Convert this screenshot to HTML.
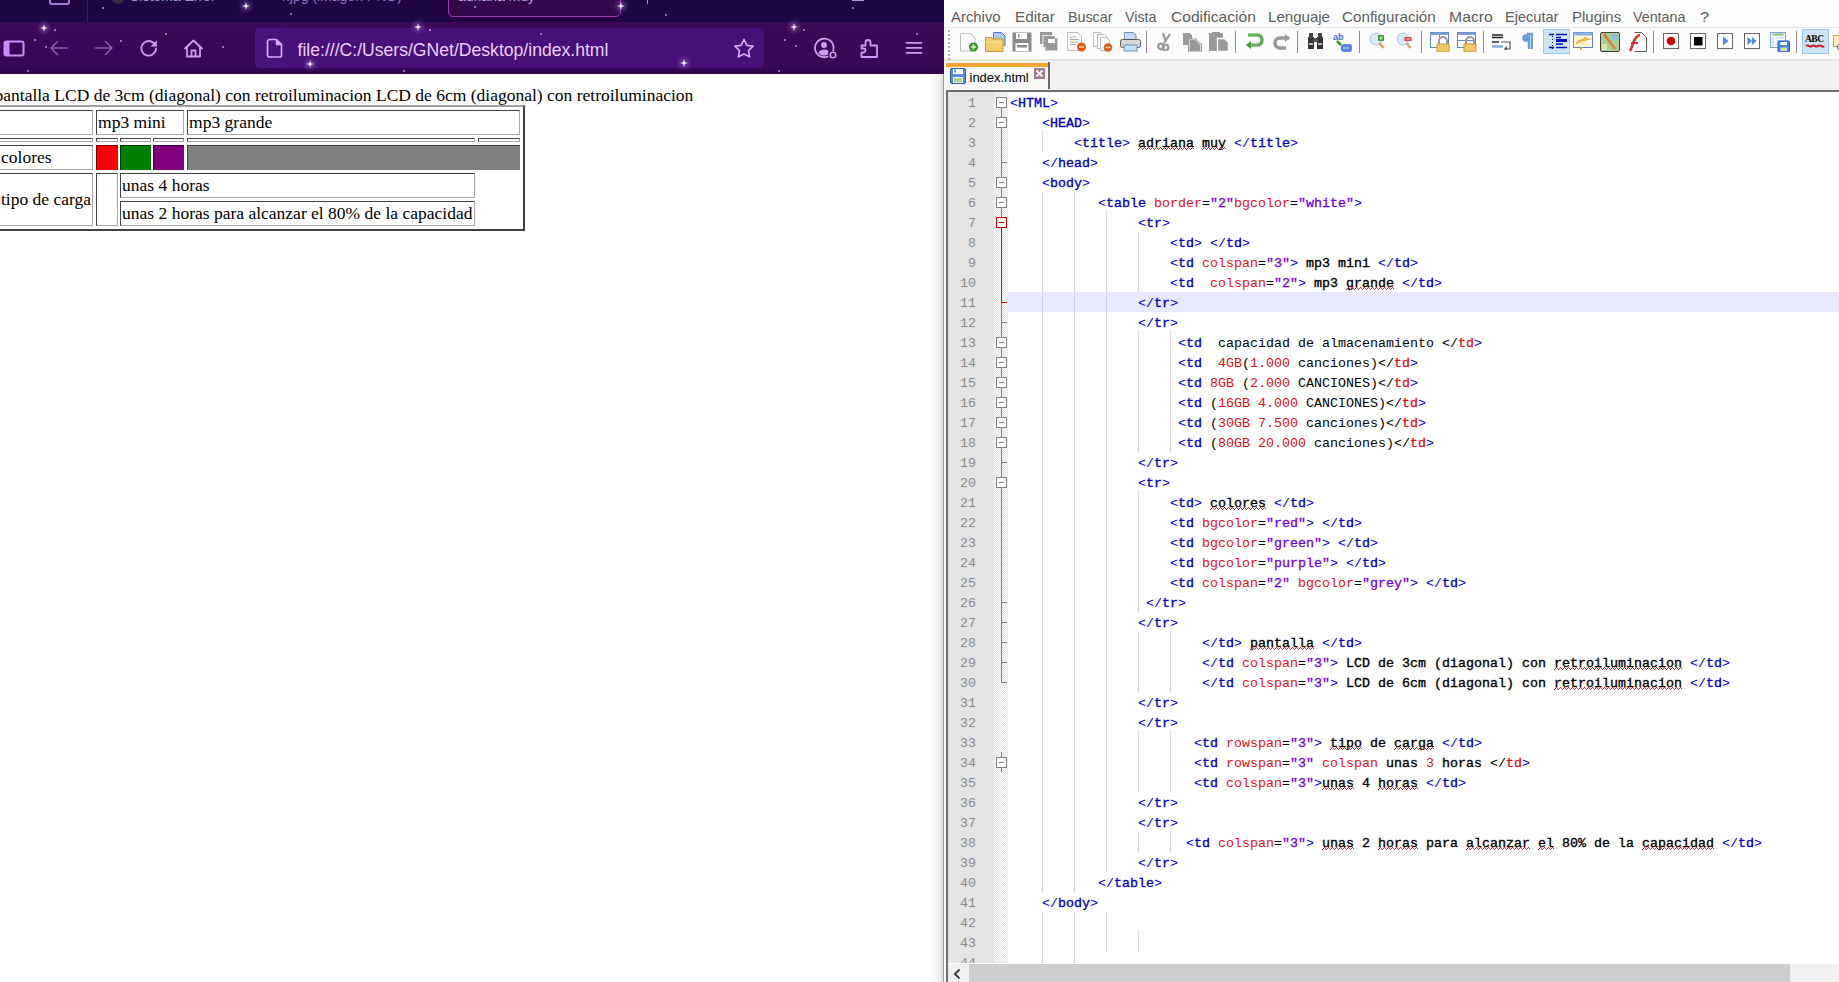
<!DOCTYPE html><html><head><meta charset="utf-8"><title>index.html</title><style>
*{box-sizing:border-box}
html,body{margin:0;padding:0}
body{width:1839px;height:982px;overflow:hidden;position:relative;background:#fff;font-family:"Liberation Sans",sans-serif}
.abs{position:absolute}
#br{position:absolute;left:0;top:0;width:944px;height:982px;overflow:hidden;background:#fff}
#tabbar{position:absolute;left:0;top:0;width:944px;height:22px;background:#210646}
#toolbar{position:absolute;left:0;top:22px;width:944px;height:52px;background:linear-gradient(#3c0858,#3a0757 80%,#31054e)}
#url{position:absolute;left:255px;top:28px;width:509px;height:40px;border-radius:5px;background:#470f77}
.star{position:absolute;width:2px;height:2px;border-radius:1px;background:rgba(225,200,255,.75)}
.glow{position:absolute;width:16px;height:16px;border-radius:8px;background:radial-gradient(circle,rgba(200,160,255,.35),rgba(200,160,255,0) 70%)}
#page{position:absolute;left:0;top:74px;width:944px;height:908px;overflow:hidden}
.ser{font-family:"Liberation Serif",serif;font-size:17.5px;line-height:20px;white-space:pre;color:#000;position:absolute}
.cell{position:absolute;border-style:solid;border-width:1px;border-color:#404040 #a8a8a8 #a8a8a8 #404040}
#npp{position:absolute;left:944px;top:0;width:895px;height:982px;background:#f0f0f0;overflow:hidden}
.menu{position:absolute;top:7px;font-size:14.5px;color:#5c5c5c;white-space:pre;line-height:20px}
#ed{position:absolute;left:946px;top:90px;width:893px;height:873px;background:#fff}
.ln{position:absolute;left:948px;width:28px;text-align:right;font-family:"Liberation Mono",monospace;font-size:13.33px;line-height:20px;color:#8a8a8a;white-space:pre}
.cl{position:absolute;font-family:"Liberation Mono",monospace;font-size:13.33px;line-height:20px;white-space:pre}
.b{color:#0000d8}
.t{color:#0000c0;-webkit-text-stroke:.35px #0000c0}
.a{color:#e01010}
.e{color:#000}
.s{color:#7000e8;-webkit-text-stroke:.3px #7000e8}
.x{color:#000;-webkit-text-stroke:.35px #000}
.xs{color:#000;-webkit-text-stroke:.35px #000;position:relative}
.xs:after{content:"";position:absolute;left:0;right:0;top:11px;height:3px;background:linear-gradient(90deg,transparent 2px,#c03030 2px,#c03030 3px,transparent 3px) 0 0/4px 1px repeat-x,linear-gradient(90deg,transparent 1px,#c03030 1px,#c03030 2px,transparent 2px,transparent 3px,#c03030 3px) 0 1px/4px 1px repeat-x,linear-gradient(90deg,#c03030 1px,transparent 1px) 0 2px/4px 1px repeat-x}
.u{color:#000}
.n{color:#e01010}
.k{color:#000}
.r{color:#e01010;-webkit-text-stroke:.3px #e01010}
.guide{position:absolute;width:1px;background:repeating-linear-gradient(to bottom,#b8b8b8 0,#b8b8b8 1px,transparent 1px,transparent 2px)}
.fbox{position:absolute;left:996px;width:11px;height:11px;border:1px solid #808080;background:#fff}
.fbox:after{content:"";position:absolute;left:2px;top:4px;width:5px;height:1px;background:#808080}
.fbox.red{border-color:#d00000}
.fbox.red:after{background:#d00000}
.vl{position:absolute;left:1001px;width:1px;background:#808080}
.tk{position:absolute;left:1001px;width:6px;height:1px;background:#808080}
.ico{position:absolute}
</style></head><body>
<div id="br">
<div id="tabbar"></div>
<div class="abs" style="left:49px;top:-16px;width:21px;height:21px;border:2px solid #a77ad6;border-radius:3px"></div>
<div class="abs" style="left:87px;top:0;width:1px;height:22px;background:#3b2160"></div>
<div class="abs" style="left:112px;top:-8px;width:12px;height:12px;border-radius:6px;background:#3a2a44"></div>
<div class="abs" style="left:130px;top:-12px;font-size:14px;line-height:17px;color:#a898c8;white-space:pre">Sistema Error</div>
<div class="abs" style="left:282px;top:-12.5px;font-size:14px;line-height:17px;color:#9078c0;white-space:pre">r.jpg (imagen PNG)</div>
<div class="abs" style="left:448px;top:-20px;width:173px;height:37px;border:1px solid #9b3bb5;border-radius:5px;background:#33084f"></div>
<div class="abs" style="left:458px;top:-12.5px;font-size:14px;line-height:17px;color:#b8a8d8;white-space:pre">adriana muy</div>
<div class="abs" style="left:647px;top:0;width:1px;height:4px;background:#a88cd0"></div>
<div class="abs" style="left:852px;top:0;width:12px;height:1px;background:#b098e0"></div>
<div id="toolbar"></div>
<div id="url"></div>
<div class="abs" style="left:255px;top:28px;width:45px;height:40px;border-radius:5px 0 0 5px;background:linear-gradient(90deg,#4c1480,rgba(71,15,119,0))"></div>
<svg class="ico" style="left:3px;top:40px" width="22" height="17" viewBox="0 0 22 17"><rect x="1.5" y="1.5" width="19" height="14" rx="2" fill="none" stroke="#c98cf6" stroke-width="2"/><rect x="1.5" y="1.5" width="5" height="14" fill="#c98cf6"/></svg>
<svg class="ico" style="left:49px;top:40px" width="20" height="16" viewBox="0 0 20 16"><path d="M18.5 8H2M8.5 1.5L2 8l6.5 6.5" fill="none" stroke="#8c55b8" stroke-width="1.6" stroke-linecap="round" stroke-linejoin="round"/></svg>
<svg class="ico" style="left:94px;top:40px" width="20" height="16" viewBox="0 0 20 16"><path d="M1.5 8H18M11.5 1.5L18 8l-6.5 6.5" fill="none" stroke="#8c55b8" stroke-width="1.6" stroke-linecap="round" stroke-linejoin="round"/></svg>
<svg class="ico" style="left:139px;top:38px" width="20" height="20" viewBox="0 0 20 20"><path d="M16.3 7.2A7.3 7.3 0 1 0 17 10.5" fill="none" stroke="#d29af5" stroke-width="1.8" stroke-linecap="round"/><path d="M17.8 2.2v6.3h-6.3z" fill="#d29af5"/></svg>
<svg class="ico" style="left:183px;top:38px" width="21" height="21" viewBox="0 0 21 21"><path d="M2 10.5L10.5 2.5 19 10.5M4 8.8V18.5h13V8.8M8.5 18.5v-6h4v6" fill="none" stroke="#d29af5" stroke-width="1.8" stroke-linejoin="round" stroke-linecap="round"/></svg>
<svg class="ico" style="left:266px;top:38px" width="18" height="20" viewBox="0 0 18 20"><path d="M3.5 1.5h7l5 5v10.5a2 2 0 0 1-2 2h-10a2 2 0 0 1-2-2v-13.5a2 2 0 0 1 2-2z" fill="none" stroke="#d9a8f8" stroke-width="1.7" stroke-linejoin="round"/><path d="M10.5 1.5v5h5" fill="#d9a8f8" stroke="#d9a8f8" stroke-width="1.5" stroke-linejoin="round"/></svg>
<div class="abs" style="left:297.5px;top:38.8px;font-size:17.6px;line-height:22px;color:#ecd0ff;white-space:pre">file:///C:/Users/GNet/Desktop/index.html</div>
<svg class="ico" style="left:733px;top:38px" width="22" height="20" viewBox="0 0 22 20"><path d="M11 1.6l2.8 5.7 6.2.9-4.5 4.4 1.1 6.2L11 15.9l-5.6 2.9 1.1-6.2L2 8.2l6.2-.9z" fill="none" stroke="#d9a8f8" stroke-width="1.7" stroke-linejoin="round"/></svg>
<svg class="ico" style="left:813px;top:37px" width="25" height="22" viewBox="0 0 25 22"><path d="M20.2 13.5A9.3 9.3 0 1 0 14.5 19.6" fill="none" stroke="#d29af5" stroke-width="1.8" stroke-linecap="round"/><circle cx="11" cy="8" r="3" fill="#d29af5"/><path d="M5.5 15.3c1.5-2 3.4-2.8 5.5-2.8s3.4.5 4.2 1.2v3.6c-1.2.7-2.6 1.3-4.2 1.3-2 0-3.8-.9-5.5-2.3z" fill="#d29af5"/><circle cx="20" cy="18" r="2.8" fill="none" stroke="#d29af5" stroke-width="1.6"/></svg>
<svg class="ico" style="left:859px;top:37px" width="21" height="22" viewBox="0 0 21 22"><path d="M2.5 8.5h4v-3a2.5 2.5 0 0 1 5 0v3h6.5v11.5h-15.5v-4.5h2a2 2 0 0 0 0-4h-2z" fill="none" stroke="#d29af5" stroke-width="1.8" stroke-linejoin="round"/></svg>
<svg class="ico" style="left:905px;top:41px" width="18" height="14" viewBox="0 0 18 14"><path d="M1.5 1.8h15M1.5 6.8h15M1.5 11.8h15" stroke="#d29af5" stroke-width="1.7" stroke-linecap="round"/></svg>
<div class="glow" style="left:35.5px;top:19.5px"></div>
<svg class="ico" style="left:39.5px;top:23.5px" width="8" height="8" viewBox="0 0 8 8"><path d="M4 0L4.8 3.2 8 4 4.8 4.8 4 8 3.2 4.8 0 4 3.2 3.2z" fill="#fff"/></svg>
<div class="star" style="left:53.8px;top:29.0px"></div>
<div class="star" style="left:33.5px;top:39.4px"></div>
<div class="star" style="left:44.8px;top:45.5px"></div>
<div class="star" style="left:27.4px;top:70.0px"></div>
<div class="star" style="left:119.6px;top:40.4px"></div>
<div class="star" style="left:165.0px;top:33.0px"></div>
<div class="star" style="left:222.0px;top:46.3px"></div>
<div class="glow" style="left:238.0px;top:-1.6px"></div>
<svg class="ico" style="left:242.0px;top:2.4px" width="8" height="8" viewBox="0 0 8 8"><path d="M4 0L4.8 3.2 8 4 4.8 4.8 4 8 3.2 4.8 0 4 3.2 3.2z" fill="#fff"/></svg>
<div class="star" style="left:290.0px;top:13.4px"></div>
<div class="glow" style="left:301.7px;top:56.4px"></div>
<svg class="ico" style="left:305.7px;top:60.4px" width="8" height="8" viewBox="0 0 8 8"><path d="M4 0L4.8 3.2 8 4 4.8 4.8 4 8 3.2 4.8 0 4 3.2 3.2z" fill="#fff"/></svg>
<div class="glow" style="left:410.0px;top:19.4px"></div>
<svg class="ico" style="left:414.0px;top:23.4px" width="8" height="8" viewBox="0 0 8 8"><path d="M4 0L4.8 3.2 8 4 4.8 4.8 4 8 3.2 4.8 0 4 3.2 3.2z" fill="#fff"/></svg>
<div class="star" style="left:428.5px;top:29.0px"></div>
<div class="star" style="left:403.0px;top:69.5px"></div>
<div class="star" style="left:540.0px;top:32.8px"></div>
<div class="glow" style="left:613.0px;top:-2.2px"></div>
<svg class="ico" style="left:617.0px;top:1.8px" width="8" height="8" viewBox="0 0 8 8"><path d="M4 0L4.8 3.2 8 4 4.8 4.8 4 8 3.2 4.8 0 4 3.2 3.2z" fill="#fff"/></svg>
<div class="star" style="left:665.0px;top:13.5px"></div>
<div class="glow" style="left:676.0px;top:55.3px"></div>
<svg class="ico" style="left:680.0px;top:59.3px" width="8" height="8" viewBox="0 0 8 8"><path d="M4 0L4.8 3.2 8 4 4.8 4.8 4 8 3.2 4.8 0 4 3.2 3.2z" fill="#fff"/></svg>
<div class="glow" style="left:786.0px;top:19.2px"></div>
<svg class="ico" style="left:790.0px;top:23.2px" width="8" height="8" viewBox="0 0 8 8"><path d="M4 0L4.8 3.2 8 4 4.8 4.8 4 8 3.2 4.8 0 4 3.2 3.2z" fill="#fff"/></svg>
<div class="star" style="left:803.0px;top:28.8px"></div>
<div class="star" style="left:783.5px;top:39.0px"></div>
<div class="star" style="left:794.6px;top:45.0px"></div>
<div class="star" style="left:915.5px;top:32.8px"></div>
<div class="star" style="left:777.5px;top:69.7px"></div>
<div class="star" style="left:101.7px;top:6.8px"></div>
<div class="star" style="left:852.0px;top:6.9px"></div>
<div class="star" style="left:474.0px;top:5.5px"></div>
<div class="ser" style="left:-5.5px;top:84.5px">pantalla LCD de 3cm (diagonal) con retroiluminacion LCD de 6cm (diagonal) con retroiluminacion</div>
<div class="abs" style="left:-8px;top:105px;width:533px;height:126px;border-style:solid;border-width:2px;border-color:#a0a0a0 #404040 #404040 #a0a0a0;background:#fff"></div>
<div class="cell" style="left:-2px;top:110px;width:95px;height:25px"></div>
<div class="cell" style="left:96px;top:110px;width:88px;height:25px"></div>
<div class="ser" style="left:98.1px;top:111.8px">mp3 mini</div>
<div class="cell" style="left:187px;top:110px;width:333px;height:25px"></div>
<div class="ser" style="left:189.1px;top:111.8px">mp3 grande</div>
<div class="cell" style="left:-2px;top:138px;width:95px;height:4px"></div>
<div class="cell" style="left:96px;top:138px;width:22px;height:4px"></div>
<div class="cell" style="left:120px;top:138px;width:31px;height:4px"></div>
<div class="cell" style="left:153px;top:138px;width:31px;height:4px"></div>
<div class="cell" style="left:187px;top:138px;width:288px;height:4px"></div>
<div class="cell" style="left:478px;top:138px;width:42px;height:4px"></div>
<div class="cell" style="left:-2px;top:145px;width:95px;height:25px"></div>
<div class="ser" style="left:1.0px;top:146.8px">colores</div>
<div class="cell" style="left:96px;top:145px;width:22px;height:25px;background:#ff0000;border-color:#7a0000 #ff0000 #ff0000 #7a0000"></div>
<div class="cell" style="left:120px;top:145px;width:31px;height:25px;background:#008000;border-color:#003800 #008000 #008000 #003800"></div>
<div class="cell" style="left:153px;top:145px;width:31px;height:25px;background:#800080;border-color:#3a003a #800080 #800080 #3a003a"></div>
<div class="cell" style="left:187px;top:145px;width:333px;height:25px;background:#808080;border-color:#404040 #808080 #808080 #404040"></div>
<div class="cell" style="left:-2px;top:173px;width:95px;height:53px"></div>
<div class="ser" style="left:1.0px;top:188.8px">tipo de carga</div>
<div class="cell" style="left:96px;top:173px;width:22px;height:53px"></div>
<div class="cell" style="left:120px;top:173px;width:355px;height:25px"></div>
<div class="ser" style="left:122.1px;top:174.8px">unas 4 horas</div>
<div class="cell" style="left:120px;top:201px;width:355px;height:25px"></div>
<div class="ser" style="left:122.1px;top:202.8px">unas 2 horas para alcanzar el 80% de la capacidad</div>
<div class="abs" style="left:929px;top:74px;width:12px;height:908px;background:linear-gradient(90deg,#fff,#eeeeee)"></div>
<div class="abs" style="left:941px;top:74px;width:2px;height:908px;background:#e4e4e4"></div>
<div class="abs" style="left:943px;top:74px;width:1px;height:908px;background:#9c9c9c"></div>
</div>
<div id="npp"></div>
<div class="abs" style="left:944px;top:0;width:895px;height:27px;background:#fdfdfd"></div>
<div class="menu" style="left:951.3px;transform-origin:0 0;transform:scaleX(1.026)">Archivo</div>
<div class="menu" style="left:1015.3px;transform-origin:0 0;transform:scaleX(1.053)">Editar</div>
<div class="menu" style="left:1068.2px;transform-origin:0 0;transform:scaleX(0.984)">Buscar</div>
<div class="menu" style="left:1125.0px;transform-origin:0 0;transform:scaleX(0.984)">Vista</div>
<div class="menu" style="left:1170.8px;transform-origin:0 0;transform:scaleX(1.074)">Codificación</div>
<div class="menu" style="left:1267.7px;transform-origin:0 0;transform:scaleX(1.039)">Lenguaje</div>
<div class="menu" style="left:1341.9px;transform-origin:0 0;transform:scaleX(1.048)">Configuración</div>
<div class="menu" style="left:1449.0px;transform-origin:0 0;transform:scaleX(1.087)">Macro</div>
<div class="menu" style="left:1505.3px;transform-origin:0 0;transform:scaleX(1.004)">Ejecutar</div>
<div class="menu" style="left:1572.0px;transform-origin:0 0;transform:scaleX(1.033)">Plugins</div>
<div class="menu" style="left:1633.3px;transform-origin:0 0;transform:scaleX(0.985)">Ventana</div>
<div class="menu" style="left:1699.5px;transform-origin:0 0;transform:scaleX(1.133)">?</div>
<div class="abs" style="left:944px;top:27px;width:895px;height:1px;background:#e6e6e6"></div>
<div class="abs" style="left:944px;top:28px;width:895px;height:31px;background:#fcfcfc"></div>
<div class="abs" style="left:944px;top:59px;width:895px;height:2px;background:#e3e3e3"></div>
<div class="abs" style="left:948px;top:30px;width:2px;height:30px;background:repeating-linear-gradient(to bottom,#b0b0b0 0,#b0b0b0 2px,transparent 2px,transparent 4px)"></div>
<div class="abs" style="left:1146px;top:31px;width:1px;height:22px;background:#8a8a8a"></div>
<div class="abs" style="left:1235px;top:31px;width:1px;height:22px;background:#8a8a8a"></div>
<div class="abs" style="left:1297px;top:31px;width:1px;height:22px;background:#8a8a8a"></div>
<div class="abs" style="left:1359px;top:31px;width:1px;height:22px;background:#8a8a8a"></div>
<div class="abs" style="left:1421px;top:31px;width:1px;height:22px;background:#8a8a8a"></div>
<div class="abs" style="left:1483px;top:31px;width:1px;height:22px;background:#8a8a8a"></div>
<div class="abs" style="left:1653px;top:31px;width:1px;height:22px;background:#8a8a8a"></div>
<div class="abs" style="left:1796px;top:31px;width:1px;height:22px;background:#8a8a8a"></div>
<div class="abs" style="left:1543px;top:29px;width:27px;height:25px;background:#cce4f7;border:1px solid #99c9ef"></div>
<div class="abs" style="left:1802px;top:29px;width:27px;height:25px;background:#cce4f7;border:1px solid #99c9ef"></div>
<svg class="ico" style="left:959px;top:32px" width="20" height="20" viewBox="0 0 20 20"><path d="M1.5 1.5h10l4.5 4.5v13h-14.5z" fill="#fafafa" stroke="#bdbdbd"/><circle cx="14.5" cy="15" r="4.5" fill="#3d8f2e"/><path d="M14.5 12.3v5.4M11.8 15h5.4" stroke="#c8f0b0" stroke-width="1.6"/></svg>
<svg class="ico" style="left:985px;top:32px" width="21" height="20" viewBox="0 0 21 20"><path d="M8.5 .5h8l3.5 3.5v9.5h-11.5z" fill="#a9c8f0" stroke="#4a78c0"/><path d="M.5 5.5h6l1 1.5h10.5v12.5h-17.5z" fill="#f7cd68" stroke="#c99a3a"/><path d="M1.5 10h16" stroke="#fbe3a0"/></svg>
<svg class="ico" style="left:1012px;top:32px" width="20" height="20" viewBox="0 0 20 20"><rect x=".5" y=".5" width="19" height="19" fill="#8a8a8a"/><rect x="4" y="1" width="11" height="6" fill="#fff"/><rect x="6" y="2" width="1.5" height="3.5" fill="#8a8a8a"/><rect x="3.5" y="11" width="13" height="8" fill="#fff"/><rect x="5" y="13" width="10" height="2.5" fill="#8a8a8a"/></svg>
<svg class="ico" style="left:1040px;top:32px" width="18" height="19" viewBox="0 0 18 19"><rect x="0" y="0" width="12" height="12" fill="#999"/><rect x="3" y="3.5" width="12" height="12" fill="#999" stroke="#fff" stroke-width=".8"/><rect x="5.5" y="6.5" width="12" height="12" fill="#999"/><rect x="8" y="7" width="7" height="4" fill="#fff"/></svg>
<svg class="ico" style="left:1067px;top:32px" width="20" height="20" viewBox="0 0 20 20"><path d="M.5 .5h10l4 4v14h-14z" fill="#fafafa" stroke="#bdbdbd"/><path d="M3 5h6M3 7.5h9M3 10h8M3 12.5h6" stroke="#a8a8a8"/><circle cx="14.5" cy="15" r="4.5" fill="#e05a10"/><path d="M12 15h5" stroke="#ffd0a0" stroke-width="1.6"/></svg>
<svg class="ico" style="left:1093px;top:32px" width="20" height="20" viewBox="0 0 20 20"><path d="M.5 .5h7l3 3v11h-10z" fill="#fafafa" stroke="#bdbdbd"/><path d="M4.5 2.5h7l3 3v11h-10z" fill="#fafafa" stroke="#bdbdbd"/><path d="M7.5 5.5h6l3 3v10h-9z" fill="#fafafa" stroke="#bdbdbd"/><circle cx="15" cy="15.5" r="4.3" fill="#e05a10"/><path d="M12.6 15.5h4.8" stroke="#ffd0a0" stroke-width="1.6"/></svg>
<svg class="ico" style="left:1120px;top:32px" width="21" height="20" viewBox="0 0 21 20"><path d="M4.5 .5h9l2.5 2.5v7h-11.5z" fill="#c3dbf8" stroke="#6a8fc0"/><rect x=".5" y="7.5" width="20" height="8" rx="2" fill="#d8d8d8" stroke="#555"/><rect x="4" y="13" width="13" height="6" fill="#c3e3f8" stroke="#6a8fc0"/></svg>
<svg class="ico" style="left:1157px;top:32px" width="16" height="19" viewBox="0 0 16 19"><path d="M6 1l3 9M13 2l-6 9" stroke="#999" stroke-width="2.2"/><circle cx="4" cy="14.5" r="2.8" fill="none" stroke="#999" stroke-width="2.2"/><circle cx="8.5" cy="15.5" r="2.8" fill="none" stroke="#999" stroke-width="2.2"/></svg>
<svg class="ico" style="left:1182px;top:32px" width="20" height="20" viewBox="0 0 20 20"><path d="M.5 .5h7l3 3v10h-10z" fill="#999" stroke="#fff"/><path d="M7 7.5h7l5 5v7h-12z" fill="#999" stroke="#fff" stroke-width="1.2"/><path d="M6.5 7h7.5l5.5 5.5v7.5h-13z" fill="none" stroke="#999"/></svg>
<svg class="ico" style="left:1209px;top:32px" width="20" height="20" viewBox="0 0 20 20"><rect x="0" y="1" width="14" height="18" fill="#999"/><rect x="3" y="0" width="8" height="3" fill="#999"/><path d="M8.5 6.5h7l4 4v9h-11z" fill="#999" stroke="#fff" stroke-width="1.4"/></svg>
<svg class="ico" style="left:1245px;top:32px" width="19" height="18" viewBox="0 0 19 18"><path d="M3 3h9a5 5 0 0 1 0 10H5" fill="none" stroke="#3a9a2a" stroke-width="3.2"/><path d="M1 13l5-4v8z" fill="#3a9a2a"/><path d="M3 3h9a5 5 0 0 1 0 10H5" fill="none" stroke="#8fd080" stroke-width="1"/></svg>
<svg class="ico" style="left:1272px;top:32px" width="19" height="18" viewBox="0 0 19 18"><path d="M17 6H8a5 5 0 0 0 0 10h6" fill="none" stroke="#9a9a9a" stroke-width="3.6"/><path d="M18 6l-5-4v8z" fill="#9a9a9a"/></svg>
<svg class="ico" style="left:1307px;top:32px" width="17" height="18" viewBox="0 0 17 18"><rect x="1" y="5" width="6" height="12" fill="#333"/><rect x="10" y="5" width="6" height="12" fill="#333"/><rect x="2" y="1" width="4" height="5" fill="#444"/><rect x="11" y="1" width="4" height="5" fill="#444"/><rect x="6" y="6" width="5" height="4" fill="#555"/><rect x="2" y="11" width="4" height="2" fill="#bbb"/><rect x="11" y="11" width="4" height="2" fill="#bbb"/></svg>
<svg class="ico" style="left:1333px;top:32px" width="20" height="20" viewBox="0 0 20 20"><text x="0" y="8" font-size="9" font-weight="bold" fill="#3f6fd0" font-family="Liberation Sans">ab</text><path d="M4 9l4 4" stroke="#3a9a2a" stroke-width="2.5"/><rect x="8" y="12" width="11" height="8" rx="3" fill="#4f86e0"/><path d="M10 16h6" stroke="#cfe0ff"/></svg>
<svg class="ico" style="left:1369px;top:32px" width="17" height="18" viewBox="0 0 17 18"><circle cx="7" cy="7" r="6" fill="#d8e8f8" stroke="#a8c4e0"/><path d="M10.5 11l4 5" stroke="#d9a35a" stroke-width="2.5"/><rect x="9" y="3" width="6" height="6" rx="1" fill="#3f9a33"/><path d="M12 4v4M10 6h4" stroke="#bff0a0"/></svg>
<svg class="ico" style="left:1396px;top:32px" width="17" height="18" viewBox="0 0 17 18"><circle cx="7" cy="7" r="6" fill="#d8e8f8" stroke="#a8c4e0"/><path d="M10.5 11l4 5" stroke="#d9a35a" stroke-width="2.5"/><rect x="8.5" y="5" width="7" height="4" fill="#e04040"/><path d="M10 7h4" stroke="#ffd0d0"/></svg>
<svg class="ico" style="left:1430px;top:32px" width="21" height="20" viewBox="0 0 21 20"><rect x=".5" y=".5" width="18" height="15" fill="#fff" stroke="#5a86c8"/><rect x=".5" y=".5" width="18" height="2.5" fill="#7aa0d8"/><path d="M9.5 3v12" stroke="#5a86c8"/><rect x="7" y="12" width="12" height="8" fill="#f0c860" stroke="#c89a30"/><path d="M9 12v-3a4 4 0 0 1 8 0v3" fill="none" stroke="#999" stroke-width="2"/></svg>
<svg class="ico" style="left:1457px;top:32px" width="21" height="20" viewBox="0 0 21 20"><rect x=".5" y=".5" width="18" height="15" fill="#fff" stroke="#5a86c8"/><rect x=".5" y=".5" width="18" height="2.5" fill="#7aa0d8"/><path d="M1 8.5h17" stroke="#5a86c8"/><rect x="7" y="12" width="12" height="8" fill="#f0c860" stroke="#c89a30"/><path d="M9 12v-3a4 4 0 0 1 8 0v3" fill="none" stroke="#999" stroke-width="2"/></svg>
<svg class="ico" style="left:1491px;top:32px" width="21" height="18" viewBox="0 0 21 18"><path d="M1 3h11M1 5.5h11M1 10h7" stroke="#222" stroke-width="1.6"/><path d="M10 10h9v7h-4" fill="none" stroke="#555" stroke-width="1.2"/><path d="M1 14.5h11" stroke="#8aa8d8" stroke-width="2.5"/><path d="M16 14v6l-3-3z" fill="#555"/></svg>
<svg class="ico" style="left:1522px;top:32px" width="11" height="18" viewBox="0 0 11 18"><path d="M5 2h5v15" fill="none" stroke="#6a9ee0" stroke-width="2.5"/><path d="M7 2v15" stroke="#6a9ee0" stroke-width="2.5"/><circle cx="4" cy="6" r="3.8" fill="#6a9ee0"/></svg>
<svg class="ico" style="left:1549px;top:33px" width="18" height="19" viewBox="0 0 18 19"><path d="M0 1.5h5M7 1.5h11M7 4.5h5M7 8h11M7 11h7M0 14.5h5M7 14.5h11" stroke="#0010c0" stroke-width="1.5"/><rect x="7" y="6" width="11" height="3" fill="#0010c0"/><path d="M3.5 3v15" stroke="#0010c0" stroke-dasharray="1 2"/></svg>
<svg class="ico" style="left:1573px;top:32px" width="20" height="19" viewBox="0 0 20 19"><rect x=".5" y=".5" width="19" height="15" fill="#fff3d0" stroke="#5a86c8"/><rect x=".5" y=".5" width="19" height="3" fill="#8ab0e8"/><path d="M3 12c3-6 6-2 9-7 2 2 4 3 6 2" fill="#f2c040" stroke="#e0a030"/><path d="M8 15v3" stroke="#e0a030" stroke-width="2"/></svg>
<svg class="ico" style="left:1600px;top:32px" width="20" height="20" viewBox="0 0 20 20"><rect x=".5" y=".5" width="19" height="19" rx="1.5" fill="#a8d090" stroke="#404040"/><path d="M4 2l11 15" stroke="#e07a30" stroke-width="2.5"/><rect x="12" y="2" width="6" height="6" fill="#8ac0e8"/><rect x="2" y="12" width="5" height="6" fill="#d8e8a0"/></svg>
<svg class="ico" style="left:1627px;top:32px" width="20" height="20" viewBox="0 0 20 20"><path d="M7.5 .5h7l5 5v14h-12" fill="#fff" stroke="#555"/><path d="M3 19c2-3 3-9 5-12 1.5-2 3-4 5-4" fill="none" stroke="#e03030" stroke-width="2.5"/><path d="M4 11h7" stroke="#e03030" stroke-width="2"/></svg>
<svg class="ico" style="left:1663px;top:33px" width="16" height="16" viewBox="0 0 16 16"><rect x=".5" y=".5" width="15" height="15" fill="#fff" stroke="#666"/><circle cx="8" cy="8" r="4.3" fill="#d00000"/></svg>
<svg class="ico" style="left:1690px;top:33px" width="16" height="16" viewBox="0 0 16 16"><rect x=".5" y=".5" width="15" height="15" fill="#fff" stroke="#666"/><rect x="4" y="4" width="8.5" height="8.5" fill="#000"/></svg>
<svg class="ico" style="left:1717px;top:33px" width="16" height="16" viewBox="0 0 16 16"><rect x=".5" y=".5" width="15" height="15" fill="#fff" stroke="#666"/><path d="M6 3.5l5.5 4.5L6 12.5z" fill="#4a86e0"/></svg>
<svg class="ico" style="left:1744px;top:33px" width="16" height="16" viewBox="0 0 16 16"><rect x=".5" y=".5" width="15" height="15" fill="#fff" stroke="#666"/><path d="M3.5 4l4.5 4-4.5 4zM8 4l4.5 4L8 12z" fill="#4a86e0"/></svg>
<svg class="ico" style="left:1770px;top:32px" width="20" height="20" viewBox="0 0 20 20"><rect x=".5" y=".5" width="15" height="15" fill="#f4f8ff" stroke="#7aa0d8"/><path d="M2.5 2.5h11" stroke="#8cc068" stroke-width="2"/><path d="M3 6v8M6 6h8M6 9h8M6 12h8" stroke="#bcd0f0"/><rect x="8" y="9" width="11.5" height="11" rx="1" fill="#4f86e0" stroke="#2e5aa8"/><rect x="10.5" y="10" width="6.5" height="3" fill="#fff"/><rect x="10.5" y="15.5" width="6.5" height="3.5" fill="#cfe8a8"/></svg>
<svg class="ico" style="left:1805px;top:33px" width="20" height="17" viewBox="0 0 20 17"><text x="0" y="9" font-size="9.5" font-weight="bold" fill="#000" font-family="Liberation Serif" textLength="19">ABC</text><path d="M1 13c2-2 4 2 6 0s4 2 6 0 4 2 6 0" fill="none" stroke="#d02020" stroke-width="2.2"/></svg>
<svg class="ico" style="left:1833px;top:33px" width="8" height="18" viewBox="0 0 8 18"><rect x=".5" y="2.5" width="12" height="11" fill="#fff0c0" stroke="#c8a050"/><circle cx="8" cy="14" r="3.5" fill="#eee" stroke="#555"/></svg>
<div class="abs" style="left:944px;top:61px;width:895px;height:29px;background:#f0f0f0"></div>
<div class="abs" style="left:946px;top:63px;width:102px;height:27px;background:#f8f8f8"></div>
<div class="abs" style="left:946px;top:63px;width:102px;height:4px;background:#f4a431"></div>
<div class="abs" style="left:1048px;top:62px;width:2px;height:27px;background:#6a6a6a"></div>
<svg class="ico" style="left:950px;top:68px" width="16" height="16" viewBox="0 0 16 16"><rect x=".5" y=".5" width="15" height="15" rx="1.5" fill="#5b8ee0" stroke="#2e5aa8"/><rect x="3" y="1" width="10" height="5" fill="#fff"/><rect x="4.5" y="1.5" width="1.2" height="3" fill="#2e5aa8"/><rect x="3" y="9" width="10" height="6" fill="#eafbe5"/><rect x="4" y="10.5" width="8" height="1.3" fill="#8cc068"/><rect x="4" y="12.5" width="8" height="1.3" fill="#8cc068"/></svg>
<div class="abs" style="left:969.5px;top:68.5px;font-size:13px;line-height:18px;color:#000;white-space:pre">index.html</div>
<svg class="ico" style="left:1034px;top:68px" width="11" height="11" viewBox="0 0 11 11"><rect width="11" height="11" fill="#a0798f"/><path d="M2.5 2.5l6 6M8.5 2.5l-6 6" stroke="#fff" stroke-width="1.8"/></svg>
<div id="ed"></div>
<div class="abs" style="left:948px;top:92px;width:46px;height:871px;background:#e4e4e4"></div>
<div class="abs" style="left:994px;top:92px;width:14px;height:871px;background:repeating-conic-gradient(#e4e4e4 0 25%,#fbfbfb 0 50%) 0 0/2px 2px"></div>
<div class="abs" style="left:1008px;top:292px;width:831px;height:20px;background:#e8e8ff"></div>
<div class="ln" style="top:94px">1</div>
<div class="cl" style="left:1010px;top:94px"><span class="b">&lt;</span><span class="t">HTML</span><span class="b">&gt;</span></div>
<div class="ln" style="top:114px">2</div>
<div class="cl" style="left:1042px;top:114px"><span class="b">&lt;</span><span class="t">HEAD</span><span class="b">&gt;</span></div>
<div class="ln" style="top:134px">3</div>
<div class="guide" style="left:1042px;top:132px;height:20px"></div>
<div class="cl" style="left:1074px;top:134px"><span class="b">&lt;</span><span class="t">title</span><span class="b">&gt;</span><span class="x"> </span><span class="xs">adriana</span><span class="x"> </span><span class="xs">muy</span><span class="x"> </span><span class="b">&lt;/</span><span class="t">title</span><span class="b">&gt;</span></div>
<div class="ln" style="top:154px">4</div>
<div class="cl" style="left:1042px;top:154px"><span class="b">&lt;/</span><span class="t">head</span><span class="b">&gt;</span></div>
<div class="ln" style="top:174px">5</div>
<div class="cl" style="left:1042px;top:174px"><span class="b">&lt;</span><span class="t">body</span><span class="b">&gt;</span></div>
<div class="ln" style="top:194px">6</div>
<div class="guide" style="left:1042px;top:192px;height:20px"></div>
<div class="guide" style="left:1074px;top:192px;height:20px"></div>
<div class="cl" style="left:1098px;top:194px"><span class="b">&lt;</span><span class="t">table</span><span class="u"> </span><span class="a">border</span><span class="e">=</span><span class="s">"2"</span><span class="a">bgcolor</span><span class="e">=</span><span class="s">"white"</span><span class="b">&gt;</span></div>
<div class="ln" style="top:214px">7</div>
<div class="guide" style="left:1042px;top:212px;height:20px"></div>
<div class="guide" style="left:1074px;top:212px;height:20px"></div>
<div class="guide" style="left:1106px;top:212px;height:20px"></div>
<div class="cl" style="left:1138px;top:214px"><span class="b">&lt;</span><span class="t">tr</span><span class="b">&gt;</span></div>
<div class="ln" style="top:234px">8</div>
<div class="guide" style="left:1042px;top:232px;height:20px"></div>
<div class="guide" style="left:1074px;top:232px;height:20px"></div>
<div class="guide" style="left:1106px;top:232px;height:20px"></div>
<div class="guide" style="left:1138px;top:232px;height:20px"></div>
<div class="cl" style="left:1170px;top:234px"><span class="b">&lt;</span><span class="t">td</span><span class="b">&gt;</span><span class="x"> </span><span class="b">&lt;/</span><span class="t">td</span><span class="b">&gt;</span></div>
<div class="ln" style="top:254px">9</div>
<div class="guide" style="left:1042px;top:252px;height:20px"></div>
<div class="guide" style="left:1074px;top:252px;height:20px"></div>
<div class="guide" style="left:1106px;top:252px;height:20px"></div>
<div class="guide" style="left:1138px;top:252px;height:20px"></div>
<div class="cl" style="left:1170px;top:254px"><span class="b">&lt;</span><span class="t">td</span><span class="u"> </span><span class="a">colspan</span><span class="e">=</span><span class="s">"3"</span><span class="b">&gt;</span><span class="x"> mp3 mini </span><span class="b">&lt;/</span><span class="t">td</span><span class="b">&gt;</span></div>
<div class="ln" style="top:274px">10</div>
<div class="guide" style="left:1042px;top:272px;height:20px"></div>
<div class="guide" style="left:1074px;top:272px;height:20px"></div>
<div class="guide" style="left:1106px;top:272px;height:20px"></div>
<div class="guide" style="left:1138px;top:272px;height:20px"></div>
<div class="cl" style="left:1170px;top:274px"><span class="b">&lt;</span><span class="t">td</span><span class="u">  </span><span class="a">colspan</span><span class="e">=</span><span class="s">"2"</span><span class="b">&gt;</span><span class="x"> mp3 </span><span class="xs">grande</span><span class="x"> </span><span class="b">&lt;/</span><span class="t">td</span><span class="b">&gt;</span></div>
<div class="ln" style="top:294px">11</div>
<div class="guide" style="left:1042px;top:292px;height:20px"></div>
<div class="guide" style="left:1074px;top:292px;height:20px"></div>
<div class="guide" style="left:1106px;top:292px;height:20px"></div>
<div class="cl" style="left:1138px;top:294px"><span class="b">&lt;/</span><span class="t">tr</span><span class="b">&gt;</span></div>
<div class="ln" style="top:314px">12</div>
<div class="guide" style="left:1042px;top:312px;height:20px"></div>
<div class="guide" style="left:1074px;top:312px;height:20px"></div>
<div class="guide" style="left:1106px;top:312px;height:20px"></div>
<div class="cl" style="left:1138px;top:314px"><span class="b">&lt;/</span><span class="t">tr</span><span class="b">&gt;</span></div>
<div class="ln" style="top:334px">13</div>
<div class="guide" style="left:1042px;top:332px;height:20px"></div>
<div class="guide" style="left:1074px;top:332px;height:20px"></div>
<div class="guide" style="left:1106px;top:332px;height:20px"></div>
<div class="guide" style="left:1138px;top:332px;height:20px"></div>
<div class="guide" style="left:1170px;top:332px;height:20px"></div>
<div class="cl" style="left:1178px;top:334px"><span class="b">&lt;</span><span class="t">td</span><span class="u">  capacidad de almacenamiento </span><span class="k">&lt;/</span><span class="r">td</span><span class="b">&gt;</span></div>
<div class="ln" style="top:354px">14</div>
<div class="guide" style="left:1042px;top:352px;height:20px"></div>
<div class="guide" style="left:1074px;top:352px;height:20px"></div>
<div class="guide" style="left:1106px;top:352px;height:20px"></div>
<div class="guide" style="left:1138px;top:352px;height:20px"></div>
<div class="guide" style="left:1170px;top:352px;height:20px"></div>
<div class="cl" style="left:1178px;top:354px"><span class="b">&lt;</span><span class="t">td</span><span class="u">  </span><span class="n">4GB</span><span class="u">(</span><span class="n">1.000</span><span class="u"> canciones)</span><span class="k">&lt;/</span><span class="r">td</span><span class="b">&gt;</span></div>
<div class="ln" style="top:374px">15</div>
<div class="guide" style="left:1042px;top:372px;height:20px"></div>
<div class="guide" style="left:1074px;top:372px;height:20px"></div>
<div class="guide" style="left:1106px;top:372px;height:20px"></div>
<div class="guide" style="left:1138px;top:372px;height:20px"></div>
<div class="guide" style="left:1170px;top:372px;height:20px"></div>
<div class="cl" style="left:1178px;top:374px"><span class="b">&lt;</span><span class="t">td</span><span class="u"> </span><span class="n">8GB</span><span class="u"> (</span><span class="n">2.000</span><span class="u"> CANCIONES)</span><span class="k">&lt;/</span><span class="r">td</span><span class="b">&gt;</span></div>
<div class="ln" style="top:394px">16</div>
<div class="guide" style="left:1042px;top:392px;height:20px"></div>
<div class="guide" style="left:1074px;top:392px;height:20px"></div>
<div class="guide" style="left:1106px;top:392px;height:20px"></div>
<div class="guide" style="left:1138px;top:392px;height:20px"></div>
<div class="guide" style="left:1170px;top:392px;height:20px"></div>
<div class="cl" style="left:1178px;top:394px"><span class="b">&lt;</span><span class="t">td</span><span class="u"> (</span><span class="n">16GB</span><span class="u"> </span><span class="n">4.000</span><span class="u"> CANCIONES)</span><span class="k">&lt;/</span><span class="r">td</span><span class="b">&gt;</span></div>
<div class="ln" style="top:414px">17</div>
<div class="guide" style="left:1042px;top:412px;height:20px"></div>
<div class="guide" style="left:1074px;top:412px;height:20px"></div>
<div class="guide" style="left:1106px;top:412px;height:20px"></div>
<div class="guide" style="left:1138px;top:412px;height:20px"></div>
<div class="guide" style="left:1170px;top:412px;height:20px"></div>
<div class="cl" style="left:1178px;top:414px"><span class="b">&lt;</span><span class="t">td</span><span class="u"> (</span><span class="n">30GB</span><span class="u"> </span><span class="n">7.500</span><span class="u"> canciones)</span><span class="k">&lt;/</span><span class="r">td</span><span class="b">&gt;</span></div>
<div class="ln" style="top:434px">18</div>
<div class="guide" style="left:1042px;top:432px;height:20px"></div>
<div class="guide" style="left:1074px;top:432px;height:20px"></div>
<div class="guide" style="left:1106px;top:432px;height:20px"></div>
<div class="guide" style="left:1138px;top:432px;height:20px"></div>
<div class="guide" style="left:1170px;top:432px;height:20px"></div>
<div class="cl" style="left:1178px;top:434px"><span class="b">&lt;</span><span class="t">td</span><span class="u"> (</span><span class="n">80GB</span><span class="u"> </span><span class="n">20.000</span><span class="u"> canciones)</span><span class="k">&lt;/</span><span class="r">td</span><span class="b">&gt;</span></div>
<div class="ln" style="top:454px">19</div>
<div class="guide" style="left:1042px;top:452px;height:20px"></div>
<div class="guide" style="left:1074px;top:452px;height:20px"></div>
<div class="guide" style="left:1106px;top:452px;height:20px"></div>
<div class="cl" style="left:1138px;top:454px"><span class="b">&lt;/</span><span class="t">tr</span><span class="b">&gt;</span></div>
<div class="ln" style="top:474px">20</div>
<div class="guide" style="left:1042px;top:472px;height:20px"></div>
<div class="guide" style="left:1074px;top:472px;height:20px"></div>
<div class="guide" style="left:1106px;top:472px;height:20px"></div>
<div class="cl" style="left:1138px;top:474px"><span class="b">&lt;</span><span class="t">tr</span><span class="b">&gt;</span></div>
<div class="ln" style="top:494px">21</div>
<div class="guide" style="left:1042px;top:492px;height:20px"></div>
<div class="guide" style="left:1074px;top:492px;height:20px"></div>
<div class="guide" style="left:1106px;top:492px;height:20px"></div>
<div class="guide" style="left:1138px;top:492px;height:20px"></div>
<div class="cl" style="left:1170px;top:494px"><span class="b">&lt;</span><span class="t">td</span><span class="b">&gt;</span><span class="x"> </span><span class="xs">colores</span><span class="x"> </span><span class="b">&lt;/</span><span class="t">td</span><span class="b">&gt;</span></div>
<div class="ln" style="top:514px">22</div>
<div class="guide" style="left:1042px;top:512px;height:20px"></div>
<div class="guide" style="left:1074px;top:512px;height:20px"></div>
<div class="guide" style="left:1106px;top:512px;height:20px"></div>
<div class="guide" style="left:1138px;top:512px;height:20px"></div>
<div class="cl" style="left:1170px;top:514px"><span class="b">&lt;</span><span class="t">td</span><span class="u"> </span><span class="a">bgcolor</span><span class="e">=</span><span class="s">"red"</span><span class="b">&gt;</span><span class="x"> </span><span class="b">&lt;/</span><span class="t">td</span><span class="b">&gt;</span></div>
<div class="ln" style="top:534px">23</div>
<div class="guide" style="left:1042px;top:532px;height:20px"></div>
<div class="guide" style="left:1074px;top:532px;height:20px"></div>
<div class="guide" style="left:1106px;top:532px;height:20px"></div>
<div class="guide" style="left:1138px;top:532px;height:20px"></div>
<div class="cl" style="left:1170px;top:534px"><span class="b">&lt;</span><span class="t">td</span><span class="u"> </span><span class="a">bgcolor</span><span class="e">=</span><span class="s">"green"</span><span class="b">&gt;</span><span class="x"> </span><span class="b">&lt;/</span><span class="t">td</span><span class="b">&gt;</span></div>
<div class="ln" style="top:554px">24</div>
<div class="guide" style="left:1042px;top:552px;height:20px"></div>
<div class="guide" style="left:1074px;top:552px;height:20px"></div>
<div class="guide" style="left:1106px;top:552px;height:20px"></div>
<div class="guide" style="left:1138px;top:552px;height:20px"></div>
<div class="cl" style="left:1170px;top:554px"><span class="b">&lt;</span><span class="t">td</span><span class="u"> </span><span class="a">bgcolor</span><span class="e">=</span><span class="s">"purple"</span><span class="b">&gt;</span><span class="x"> </span><span class="b">&lt;/</span><span class="t">td</span><span class="b">&gt;</span></div>
<div class="ln" style="top:574px">25</div>
<div class="guide" style="left:1042px;top:572px;height:20px"></div>
<div class="guide" style="left:1074px;top:572px;height:20px"></div>
<div class="guide" style="left:1106px;top:572px;height:20px"></div>
<div class="guide" style="left:1138px;top:572px;height:20px"></div>
<div class="cl" style="left:1170px;top:574px"><span class="b">&lt;</span><span class="t">td</span><span class="u"> </span><span class="a">colspan</span><span class="e">=</span><span class="s">"2"</span><span class="u"> </span><span class="a">bgcolor</span><span class="e">=</span><span class="s">"grey"</span><span class="b">&gt;</span><span class="x"> </span><span class="b">&lt;/</span><span class="t">td</span><span class="b">&gt;</span></div>
<div class="ln" style="top:594px">26</div>
<div class="guide" style="left:1042px;top:592px;height:20px"></div>
<div class="guide" style="left:1074px;top:592px;height:20px"></div>
<div class="guide" style="left:1106px;top:592px;height:20px"></div>
<div class="guide" style="left:1138px;top:592px;height:20px"></div>
<div class="cl" style="left:1146px;top:594px"><span class="b">&lt;/</span><span class="t">tr</span><span class="b">&gt;</span></div>
<div class="ln" style="top:614px">27</div>
<div class="guide" style="left:1042px;top:612px;height:20px"></div>
<div class="guide" style="left:1074px;top:612px;height:20px"></div>
<div class="guide" style="left:1106px;top:612px;height:20px"></div>
<div class="cl" style="left:1138px;top:614px"><span class="b">&lt;/</span><span class="t">tr</span><span class="b">&gt;</span></div>
<div class="ln" style="top:634px">28</div>
<div class="guide" style="left:1042px;top:632px;height:20px"></div>
<div class="guide" style="left:1074px;top:632px;height:20px"></div>
<div class="guide" style="left:1106px;top:632px;height:20px"></div>
<div class="guide" style="left:1138px;top:632px;height:20px"></div>
<div class="guide" style="left:1170px;top:632px;height:20px"></div>
<div class="cl" style="left:1202px;top:634px"><span class="b">&lt;/</span><span class="t">td</span><span class="b">&gt;</span><span class="x"> </span><span class="xs">pantalla</span><span class="x"> </span><span class="b">&lt;/</span><span class="t">td</span><span class="b">&gt;</span></div>
<div class="ln" style="top:654px">29</div>
<div class="guide" style="left:1042px;top:652px;height:20px"></div>
<div class="guide" style="left:1074px;top:652px;height:20px"></div>
<div class="guide" style="left:1106px;top:652px;height:20px"></div>
<div class="guide" style="left:1138px;top:652px;height:20px"></div>
<div class="guide" style="left:1170px;top:652px;height:20px"></div>
<div class="cl" style="left:1202px;top:654px"><span class="b">&lt;/</span><span class="t">td</span><span class="u"> </span><span class="a">colspan</span><span class="e">=</span><span class="s">"3"</span><span class="b">&gt;</span><span class="x"> LCD de 3cm (diagonal) con </span><span class="xs">retroiluminacion</span><span class="x"> </span><span class="b">&lt;/</span><span class="t">td</span><span class="b">&gt;</span></div>
<div class="ln" style="top:674px">30</div>
<div class="guide" style="left:1042px;top:672px;height:20px"></div>
<div class="guide" style="left:1074px;top:672px;height:20px"></div>
<div class="guide" style="left:1106px;top:672px;height:20px"></div>
<div class="guide" style="left:1138px;top:672px;height:20px"></div>
<div class="guide" style="left:1170px;top:672px;height:20px"></div>
<div class="cl" style="left:1202px;top:674px"><span class="b">&lt;/</span><span class="t">td</span><span class="u"> </span><span class="a">colspan</span><span class="e">=</span><span class="s">"3"</span><span class="b">&gt;</span><span class="x"> LCD de 6cm (diagonal) con </span><span class="xs">retroiluminacion</span><span class="x"> </span><span class="b">&lt;/</span><span class="t">td</span><span class="b">&gt;</span></div>
<div class="ln" style="top:694px">31</div>
<div class="guide" style="left:1042px;top:692px;height:20px"></div>
<div class="guide" style="left:1074px;top:692px;height:20px"></div>
<div class="guide" style="left:1106px;top:692px;height:20px"></div>
<div class="cl" style="left:1138px;top:694px"><span class="b">&lt;/</span><span class="t">tr</span><span class="b">&gt;</span></div>
<div class="ln" style="top:714px">32</div>
<div class="guide" style="left:1042px;top:712px;height:20px"></div>
<div class="guide" style="left:1074px;top:712px;height:20px"></div>
<div class="guide" style="left:1106px;top:712px;height:20px"></div>
<div class="cl" style="left:1138px;top:714px"><span class="b">&lt;/</span><span class="t">tr</span><span class="b">&gt;</span></div>
<div class="ln" style="top:734px">33</div>
<div class="guide" style="left:1042px;top:732px;height:20px"></div>
<div class="guide" style="left:1074px;top:732px;height:20px"></div>
<div class="guide" style="left:1106px;top:732px;height:20px"></div>
<div class="guide" style="left:1138px;top:732px;height:20px"></div>
<div class="guide" style="left:1170px;top:732px;height:20px"></div>
<div class="cl" style="left:1194px;top:734px"><span class="b">&lt;</span><span class="t">td</span><span class="u"> </span><span class="a">rowspan</span><span class="e">=</span><span class="s">"3"</span><span class="b">&gt;</span><span class="x"> </span><span class="xs">tipo</span><span class="x"> de </span><span class="xs">carga</span><span class="x"> </span><span class="b">&lt;/</span><span class="t">td</span><span class="b">&gt;</span></div>
<div class="ln" style="top:754px">34</div>
<div class="guide" style="left:1042px;top:752px;height:20px"></div>
<div class="guide" style="left:1074px;top:752px;height:20px"></div>
<div class="guide" style="left:1106px;top:752px;height:20px"></div>
<div class="guide" style="left:1138px;top:752px;height:20px"></div>
<div class="guide" style="left:1170px;top:752px;height:20px"></div>
<div class="cl" style="left:1194px;top:754px"><span class="b">&lt;</span><span class="t">td</span><span class="u"> </span><span class="a">rowspan</span><span class="e">=</span><span class="s">"3"</span><span class="u"> </span><span class="a">colspan</span><span class="x"> unas </span><span class="n">3</span><span class="x"> horas </span><span class="k">&lt;/</span><span class="r">td</span><span class="b">&gt;</span></div>
<div class="ln" style="top:774px">35</div>
<div class="guide" style="left:1042px;top:772px;height:20px"></div>
<div class="guide" style="left:1074px;top:772px;height:20px"></div>
<div class="guide" style="left:1106px;top:772px;height:20px"></div>
<div class="guide" style="left:1138px;top:772px;height:20px"></div>
<div class="guide" style="left:1170px;top:772px;height:20px"></div>
<div class="cl" style="left:1194px;top:774px"><span class="b">&lt;</span><span class="t">td</span><span class="u"> </span><span class="a">colspan</span><span class="e">=</span><span class="s">"3"</span><span class="b">&gt;</span><span class="xs">unas</span><span class="x"> 4 </span><span class="xs">horas</span><span class="x"> </span><span class="b">&lt;/</span><span class="t">td</span><span class="b">&gt;</span></div>
<div class="ln" style="top:794px">36</div>
<div class="guide" style="left:1042px;top:792px;height:20px"></div>
<div class="guide" style="left:1074px;top:792px;height:20px"></div>
<div class="guide" style="left:1106px;top:792px;height:20px"></div>
<div class="cl" style="left:1138px;top:794px"><span class="b">&lt;/</span><span class="t">tr</span><span class="b">&gt;</span></div>
<div class="ln" style="top:814px">37</div>
<div class="guide" style="left:1042px;top:812px;height:20px"></div>
<div class="guide" style="left:1074px;top:812px;height:20px"></div>
<div class="guide" style="left:1106px;top:812px;height:20px"></div>
<div class="cl" style="left:1138px;top:814px"><span class="b">&lt;/</span><span class="t">tr</span><span class="b">&gt;</span></div>
<div class="ln" style="top:834px">38</div>
<div class="guide" style="left:1042px;top:832px;height:20px"></div>
<div class="guide" style="left:1074px;top:832px;height:20px"></div>
<div class="guide" style="left:1106px;top:832px;height:20px"></div>
<div class="guide" style="left:1138px;top:832px;height:20px"></div>
<div class="guide" style="left:1170px;top:832px;height:20px"></div>
<div class="cl" style="left:1186px;top:834px"><span class="b">&lt;</span><span class="t">td</span><span class="u"> </span><span class="a">colspan</span><span class="e">=</span><span class="s">"3"</span><span class="b">&gt;</span><span class="x"> </span><span class="xs">unas</span><span class="x"> 2 </span><span class="xs">horas</span><span class="x"> para </span><span class="xs">alcanzar</span><span class="x"> </span><span class="xs">el</span><span class="x"> 80% de la </span><span class="xs">capacidad</span><span class="x"> </span><span class="b">&lt;/</span><span class="t">td</span><span class="b">&gt;</span></div>
<div class="ln" style="top:854px">39</div>
<div class="guide" style="left:1042px;top:852px;height:20px"></div>
<div class="guide" style="left:1074px;top:852px;height:20px"></div>
<div class="guide" style="left:1106px;top:852px;height:20px"></div>
<div class="cl" style="left:1138px;top:854px"><span class="b">&lt;/</span><span class="t">tr</span><span class="b">&gt;</span></div>
<div class="ln" style="top:874px">40</div>
<div class="guide" style="left:1042px;top:872px;height:20px"></div>
<div class="guide" style="left:1074px;top:872px;height:20px"></div>
<div class="cl" style="left:1098px;top:874px"><span class="b">&lt;/</span><span class="t">table</span><span class="b">&gt;</span></div>
<div class="ln" style="top:894px">41</div>
<div class="cl" style="left:1042px;top:894px"><span class="b">&lt;/</span><span class="t">body</span><span class="b">&gt;</span></div>
<div class="ln" style="top:914px">42</div>
<div class="guide" style="left:1042px;top:912px;height:20px"></div>
<div class="guide" style="left:1074px;top:912px;height:20px"></div>
<div class="guide" style="left:1106px;top:912px;height:20px"></div>
<div class="ln" style="top:934px">43</div>
<div class="guide" style="left:1042px;top:932px;height:20px"></div>
<div class="guide" style="left:1074px;top:932px;height:20px"></div>
<div class="guide" style="left:1106px;top:932px;height:20px"></div>
<div class="guide" style="left:1138px;top:932px;height:20px"></div>
<div class="ln" style="top:954px">44</div>
<div class="guide" style="left:1042px;top:952px;height:20px"></div>
<div class="guide" style="left:1074px;top:952px;height:20px"></div>
<div class="vl" style="top:108px;height:109px"></div>
<div class="vl" style="top:302px;height:381px"></div>
<div class="vl" style="top:228px;height:75px;background:#d00000"></div>
<div class="fbox" style="top:97px"></div>
<div class="fbox" style="top:117px"></div>
<div class="fbox" style="top:177px"></div>
<div class="fbox" style="top:197px"></div>
<div class="fbox" style="top:337px"></div>
<div class="fbox" style="top:357px"></div>
<div class="fbox" style="top:377px"></div>
<div class="fbox" style="top:397px"></div>
<div class="fbox" style="top:417px"></div>
<div class="fbox" style="top:437px"></div>
<div class="fbox" style="top:477px"></div>
<div class="fbox red" style="top:217px"></div>
<div class="tk" style="top:162px"></div>
<div class="tk" style="top:322px"></div>
<div class="tk" style="top:462px"></div>
<div class="tk" style="top:602px"></div>
<div class="tk" style="top:622px"></div>
<div class="tk" style="top:642px"></div>
<div class="tk" style="top:662px"></div>
<div class="tk" style="top:682px"></div>
<div class="tk" style="top:302px;background:#d00000"></div>
<div class="vl" style="top:752px;height:5px"></div>
<div class="vl" style="top:768px;height:4px"></div>
<div class="fbox" style="top:757px"></div>
<div class="abs" style="left:946px;top:90px;width:893px;height:2px;background:#6d6d6d"></div>
<div class="abs" style="left:946px;top:90px;width:2px;height:892px;background:#6d6d6d"></div>
<div class="abs" style="left:944px;top:61px;width:2px;height:921px;background:#fafafa"></div>
<div class="abs" style="left:948px;top:963px;width:891px;height:1px;background:#fff"></div>
<div class="abs" style="left:948px;top:964px;width:891px;height:18px;background:#f0f0f0"></div>
<div class="abs" style="left:969px;top:964px;width:821px;height:18px;background:#cdcdcd"></div>
<svg class="ico" style="left:952px;top:968px" width="12" height="12" viewBox="0 0 12 12"><path d="M7.5 1.5L3 6l4.5 4.5" fill="none" stroke="#404040" stroke-width="2"/></svg>
</body></html>
